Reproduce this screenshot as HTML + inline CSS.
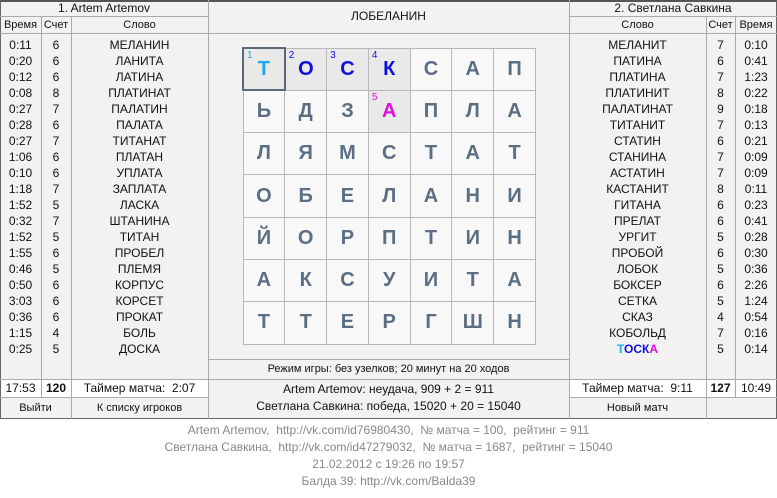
<!DOCTYPE html>
<html><head><meta charset="utf-8"><style>
*{margin:0;padding:0;box-sizing:border-box}
body{width:777px;height:498px;background:#fff;font-family:"Liberation Sans",sans-serif;font-size:12px;color:#111;position:relative;overflow:hidden}
.a{position:absolute}
.c{text-align:center}
.bg{background:#f2f2f2}
.hl{border-top:1px solid #aaa;height:0}
.vl{border-left:1px solid #aaa;width:0}
.words div{height:16px;line-height:16px}
.g{position:absolute;left:242px;top:47px;width:294px;height:296px;border-collapse:collapse}
.g td{width:42px;height:42.3px;border:1px solid #b8b8b8;background:#f8f8f8;text-align:center;font-weight:bold;font-size:20px;color:#5b6e82;position:relative}
.g td.s{background:#e9e9e9}
.g td sup{position:absolute;left:3px;top:1px;font-size:10px;font-weight:normal}
.foot div{height:17px;line-height:17px}
</style></head><body>
<div class="a bg" style="left:0;top:0;width:777px;height:419px;border:1px solid #666;border-top:2px solid #555"></div>
<div class="a" style="left:1px;top:379px;width:207px;height:18px;background:#fff"></div>
<div class="a" style="left:569px;top:379px;width:207px;height:18px;background:#fff"></div>
<div class="a vl" style="left:208px;top:0;height:419px"></div>
<div class="a vl" style="left:569px;top:0;height:419px"></div>
<div class="a vl" style="left:41px;top:16px;height:381px"></div>
<div class="a vl" style="left:71px;top:16px;height:403px"></div>
<div class="a vl" style="left:706px;top:16px;height:403px"></div>
<div class="a vl" style="left:735px;top:16px;height:381px"></div>
<div class="a hl" style="left:0;top:16px;width:208px"></div>
<div class="a hl" style="left:569px;top:16px;width:208px"></div>
<div class="a hl" style="left:0;top:33px;width:777px"></div>
<div class="a hl" style="left:0;top:379px;width:777px"></div>
<div class="a hl" style="left:0;top:397px;width:208px"></div>
<div class="a hl" style="left:569px;top:397px;width:208px"></div>
<div class="a hl" style="left:208px;top:359px;width:361px"></div>
<div class="a c" style="left:0;top:1px;width:208px;line-height:15px">1. Artem Artemov</div>
<div class="a c" style="left:569px;top:1px;width:208px;line-height:15px">2. Светлана Савкина</div>
<div class="a c" style="left:0;top:17px;width:41px;line-height:16px;font-size:11px">Время</div>
<div class="a c" style="left:41px;top:17px;width:30px;line-height:16px;font-size:11px">Счет</div>
<div class="a c" style="left:71px;top:17px;width:137px;line-height:16px;font-size:11px">Слово</div>
<div class="a c" style="left:569px;top:17px;width:137px;line-height:16px;font-size:11px">Слово</div>
<div class="a c" style="left:706px;top:17px;width:29px;line-height:16px;font-size:11px">Счет</div>
<div class="a c" style="left:735px;top:17px;width:42px;line-height:16px;font-size:11px">Время</div>
<div class="a c" style="left:208px;top:8px;width:361px;line-height:16px">ЛОБЕЛАНИН</div>
<div class="a c words" style="left:0;top:37px;width:41px"><div>0:11</div><div>0:20</div><div>0:12</div><div>0:08</div><div>0:27</div><div>0:28</div><div>0:27</div><div>1:06</div><div>0:10</div><div>1:18</div><div>1:52</div><div>0:32</div><div>1:52</div><div>1:55</div><div>0:46</div><div>0:50</div><div>3:03</div><div>0:36</div><div>1:15</div><div>0:25</div></div>
<div class="a c words" style="left:41px;top:37px;width:30px"><div>6</div><div>6</div><div>6</div><div>8</div><div>7</div><div>6</div><div>7</div><div>6</div><div>6</div><div>7</div><div>5</div><div>7</div><div>5</div><div>6</div><div>5</div><div>6</div><div>6</div><div>6</div><div>4</div><div>5</div></div>
<div class="a c words" style="left:71px;top:37px;width:137px"><div>МЕЛАНИН</div><div>ЛАНИТА</div><div>ЛАТИНА</div><div>ПЛАТИНАТ</div><div>ПАЛАТИН</div><div>ПАЛАТА</div><div>ТИТАНАТ</div><div>ПЛАТАН</div><div>УПЛАТА</div><div>ЗАПЛАТА</div><div>ЛАСКА</div><div>ШТАНИНА</div><div>ТИТАН</div><div>ПРОБЕЛ</div><div>ПЛЕМЯ</div><div>КОРПУС</div><div>КОРСЕТ</div><div>ПРОКАТ</div><div>БОЛЬ</div><div>ДОСКА</div></div>
<div class="a c words" style="left:569px;top:37px;width:137px"><div>МЕЛАНИТ</div><div>ПАТИНА</div><div>ПЛАТИНА</div><div>ПЛАТИНИТ</div><div>ПАЛАТИНАТ</div><div>ТИТАНИТ</div><div>СТАТИН</div><div>СТАНИНА</div><div>АСТАТИН</div><div>КАСТАНИТ</div><div>ГИТАНА</div><div>ПРЕЛАТ</div><div>УРГИТ</div><div>ПРОБОЙ</div><div>ЛОБОК</div><div>БОКСЕР</div><div>СЕТКА</div><div>СКАЗ</div><div>КОБОЛЬД</div><div style="font-weight:bold"><span style="color:#1fa8ee">Т</span><span style="color:#1010dd">ОСК</span><span style="color:#dd10dd">А</span></div></div>
<div class="a c words" style="left:706px;top:37px;width:29px"><div>7</div><div>6</div><div>7</div><div>8</div><div>9</div><div>7</div><div>6</div><div>7</div><div>7</div><div>8</div><div>6</div><div>6</div><div>5</div><div>6</div><div>5</div><div>6</div><div>5</div><div>4</div><div>7</div><div>5</div></div>
<div class="a c words" style="left:735px;top:37px;width:42px"><div>0:10</div><div>0:41</div><div>1:23</div><div>0:22</div><div>0:18</div><div>0:13</div><div>0:21</div><div>0:09</div><div>0:09</div><div>0:11</div><div>0:23</div><div>0:41</div><div>0:28</div><div>0:30</div><div>0:36</div><div>2:26</div><div>1:24</div><div>0:54</div><div>0:16</div><div>0:14</div></div>
<table class="g">
<tr><td class="s" style="border:2px solid #5a6878;color:#1fa8ee"><sup style="color:#1fa8ee">1</sup>Т</td><td class="s" style="color:#1010dd"><sup>2</sup>О</td><td class="s" style="color:#1010dd"><sup>3</sup>С</td><td class="s" style="color:#1010dd"><sup>4</sup>К</td><td>С</td><td>А</td><td>П</td></tr>
<tr><td>Ь</td><td>Д</td><td>З</td><td class="s" style="color:#dd10dd"><sup>5</sup>А</td><td>П</td><td>Л</td><td>А</td></tr>
<tr><td>Л</td><td>Я</td><td>М</td><td>С</td><td>Т</td><td>А</td><td>Т</td></tr>
<tr><td>О</td><td>Б</td><td>Е</td><td>Л</td><td>А</td><td>Н</td><td>И</td></tr>
<tr><td>Й</td><td>О</td><td>Р</td><td>П</td><td>Т</td><td>И</td><td>Н</td></tr>
<tr><td>А</td><td>К</td><td>С</td><td>У</td><td>И</td><td>Т</td><td>А</td></tr>
<tr><td>Т</td><td>Т</td><td>Е</td><td>Р</td><td>Г</td><td>Ш</td><td>Н</td></tr>
</table>
<div class="a c" style="left:208px;top:360px;width:361px;line-height:19px;font-size:11px">Режим игры: без узелков; 20 минут на 20 ходов</div>
<div class="a c" style="left:208px;top:381px;width:361px;line-height:17px">Artem Artemov: неудача, 909 + 2 = 911<br>Светлана Савкина: победа, 15020 + 20 = 15040</div>
<div class="a c" style="left:0;top:380px;width:41px;line-height:17px">17:53</div>
<div class="a c" style="left:41px;top:380px;width:30px;line-height:17px;font-weight:bold">120</div>
<div class="a c" style="left:71px;top:380px;width:137px;line-height:17px">Таймер матча:&nbsp; 2:07</div>
<div class="a c" style="left:0;top:399px;width:71px;line-height:19px;font-size:11px">Выйти</div>
<div class="a c" style="left:71px;top:399px;width:137px;line-height:19px;font-size:11px">К списку игроков</div>
<div class="a c" style="left:569px;top:380px;width:137px;line-height:17px">Таймер матча:&nbsp; 9:11</div>
<div class="a c" style="left:706px;top:380px;width:29px;line-height:17px;font-weight:bold">127</div>
<div class="a c" style="left:735px;top:380px;width:42px;line-height:17px">10:49</div>
<div class="a c" style="left:569px;top:399px;width:137px;line-height:19px;font-size:11px">Новый матч</div>
<div class="a c foot" style="left:0;top:422px;width:777px;color:#888"><div>Artem Artemov,&nbsp; http://vk.com/id76980430,&nbsp; № матча = 100,&nbsp; рейтинг = 911</div><div>Светлана Савкина,&nbsp; http://vk.com/id47279032,&nbsp; № матча = 1687,&nbsp; рейтинг = 15040</div><div>21.02.2012 с 19:26 по 19:57</div><div>Балда 39: http://vk.com/Balda39</div></div>
</body></html>
